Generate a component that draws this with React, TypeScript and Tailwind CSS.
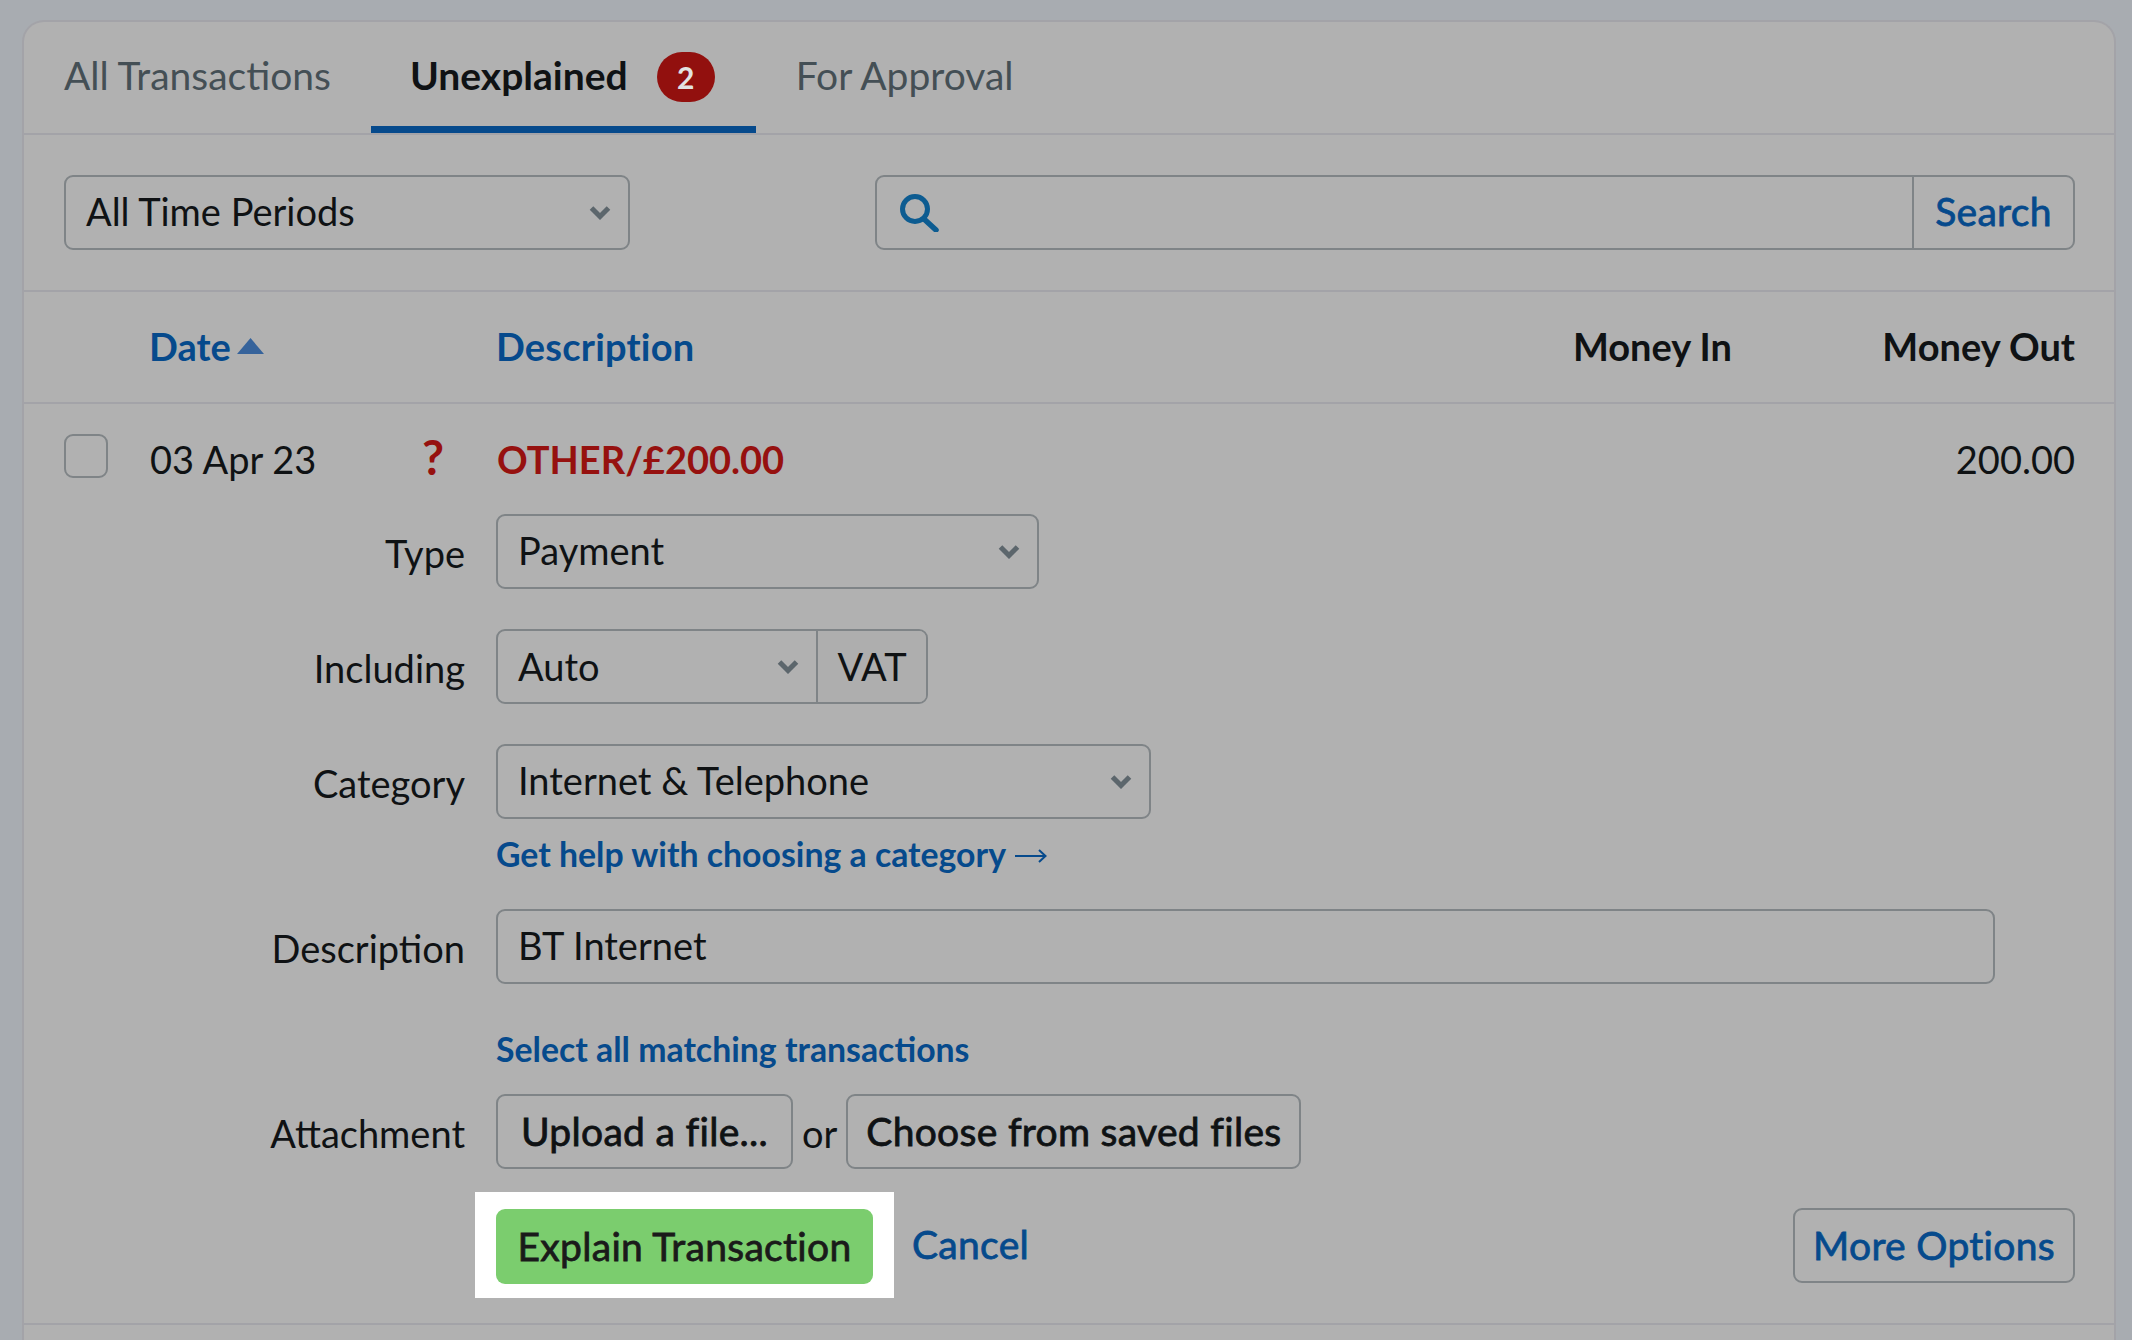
import type { ReactNode } from "react"

function Chevron() {
  return (
    <svg width="24" height="16" viewBox="0 0 24 16" className="shrink-0">
      <path d="M3.5 3 L12 11.5 L20.5 3" fill="none" stroke="#5c666c" strokeWidth="5" />
    </svg>
  )
}

function SearchIcon() {
  return (
    <svg width="40" height="38" viewBox="0 0 40 38">
      <circle cx="16" cy="15" r="12.5" fill="none" stroke="#0d5c91" strokeWidth="5" />
      <path d="M25 25 L37 36" fill="none" stroke="#0d5c91" strokeWidth="5.5" strokeLinecap="round" />
    </svg>
  )
}

function Select({ label, width }: { label: string; width: string }) {
  return (
    <div className={`${width} h-[75px] flex items-center justify-between rounded-[9px] border-2 border-[#7f8487] pl-[20px] pr-[16px]`}>
      <span className="pb-[3px]">{label}</span>
      <Chevron />
    </div>
  )
}

function FormRow({ label, children, className }: { label: string; children: ReactNode; className?: string }) {
  return (
    <div className={`flex gap-[31px] items-center ${className ?? ""}`}>
      <div className="w-[441px] text-right pt-[3px]">{label}</div>
      {children}
    </div>
  )
}

function OutlineButton({ children, width, blue }: { children: ReactNode; width: string; blue?: boolean }) {
  return (
    <div className={`${width} h-[75px] flex items-center justify-center rounded-[9px] border-2 border-[#7f8487] text-[39px] tracking-[0.3px] [-webkit-text-stroke:0.8px_currentColor] ${blue ? "text-[#064a8c]" : ""}`}>
      {children}
    </div>
  )
}

export default function App() {
  return (
    <div className="w-[2132px] h-[1340px] overflow-hidden bg-[#a8acb1] pt-[20px] pl-[22px] font-[Lato,sans-serif] text-[38px] leading-none text-[#0f1214]">
      <div className="w-[2094px] h-[1320px] rounded-t-[22px] border-2 border-b-0 border-[#a3a3a8] bg-[#b1b1b1]">
        {/* Tabs */}
        <div className="h-[113px] flex border-b-2 border-[#a3a3a8] pl-[40px] text-[39px]">
          <div className="flex items-center pb-[4px] pr-[40px] text-[#444f55]">All Transactions</div>
          <div className="flex items-center gap-[29px] pt-[3px] pl-[39px] pr-[41px] border-b-[7px] border-[#064a8c] font-bold">
            <span>Unexplained</span>
            <span className="mt-[3px] w-[58px] h-[50px] rounded-full bg-[#92100e] text-[#e2e2e2] text-[30px] flex items-center justify-center">2</span>
          </div>
          <div className="flex items-center pb-[4px] px-[40px] text-[#444f55]">For Approval</div>
        </div>

        {/* Filters */}
        <div className="h-[157px] flex border-b-2 border-[#a3a3a8] pl-[40px] pt-[40px]">
          <Select label="All Time Periods" width="w-[566px]" />
          <div className="ml-[245px] w-[1200px] h-[75px] flex rounded-[9px] border-2 border-[#7f8487]">
            <div className="flex-1 flex items-center pl-[22px]">
              <SearchIcon />
            </div>
            <div className="w-[161px] pb-[3px] border-l-2 border-[#7f8487] flex items-center justify-center text-[39px] tracking-[0.3px] [-webkit-text-stroke:0.8px_currentColor] text-[#064a8c]">Search</div>
          </div>
        </div>

        {/* Table header */}
        <div className="h-[112px] flex items-center border-b-2 border-[#a3a3a8] pl-[125px] pr-[39px] pb-[2px] font-bold">
          <div className="w-[347px] flex items-center gap-[6px] text-[#064a8c]">
            Date
            <svg width="27" height="16" viewBox="0 0 27 16">
              <path d="M13.5 0 L27 16 L0 16 Z" fill="#36639b" />
            </svg>
          </div>
          <div className="flex-1 text-[#064a8c] tracking-[0.2px]">Description</div>
          <div className="w-[160px] text-right">Money In</div>
          <div className="w-[343px] text-right">Money Out</div>
        </div>

        {/* Transaction */}
        <div className="h-[921px] border-b-2 border-[#a3a3a8] pt-[30px]">
          <div className="h-[44px] flex items-center pl-[40px] pr-[39px]">
            <div className="w-[44px] h-[44px] rounded-[9px] border-2 border-[#7f8487]" />
            <div className="w-[272px] ml-[42px] pt-[6px]">03 Apr 23</div>
            <div className="w-[75px] pt-[1px] text-[48px] font-bold text-[#96110f]">?</div>
            <div className="flex-1 pt-[6px] font-bold text-[#96110f]">OTHER/£200.00</div>
            <div className="pt-[6px]">200.00</div>
          </div>

          <FormRow label="Type" className="mt-[36px]">
            <Select label="Payment" width="w-[543px]" />
          </FormRow>

          <FormRow label="Including" className="mt-[40px]">
            <div className="w-[432px] h-[75px] flex rounded-[9px] border-2 border-[#7f8487]">
              <div className="w-[318px] flex items-center justify-between pl-[20px] pr-[16px]">
                <span className="pb-[2px]">Auto</span>
                <Chevron />
              </div>
              <div className="flex-1 pb-[2px] border-l-2 border-[#7f8487] bg-[#aeaeae] rounded-r-[7px] flex items-center justify-center">VAT</div>
            </div>
          </FormRow>

          <FormRow label="Category" className="mt-[40px]">
            <Select label="Internet & Telephone" width="w-[655px]" />
          </FormRow>

          <div className="mt-[19px] ml-[472px] flex items-center gap-[9px] text-[33.8px] font-bold text-[#064a8c]">
            Get help with choosing a category
            <svg width="32" height="16" viewBox="0 0 32 16" className="mt-[3px]">
              <path d="M0 8 H30 M24 2 L30.5 8 L24 14" fill="none" stroke="#064a8c" strokeWidth="2" />
            </svg>
          </div>

          <FormRow label="Description" className="mt-[37px]">
            <div className="w-[1499px] h-[75px] pb-[2px] flex items-center rounded-[9px] border-2 border-[#7f8487] pl-[20px]">BT Internet</div>
          </FormRow>

          <div className="mt-[49px] ml-[472px] text-[33.8px] font-bold text-[#064a8c]">
            Select all matching transactions
          </div>

          <FormRow label="Attachment" className="mt-[27px]">
            <div className="flex items-center gap-[9px]">
              <OutlineButton width="w-[297px]">Upload a file...</OutlineButton>
              <span className="pt-[4px]">or</span>
              <OutlineButton width="w-[455px]">Choose from saved files</OutlineButton>
            </div>
          </FormRow>

          <div className="mt-[23px] ml-[451px] pr-[39px] flex items-center">
            <div className="bg-white pl-[21px] pr-[21px] pt-[17px] pb-[14px]">
              <div className="w-[377px] h-[75px] rounded-[9px] bg-[#7bcd6e] flex items-center justify-center text-[39px] tracking-[0.3px] [-webkit-text-stroke:0.8px_currentColor] text-[#1a1a1a]">
                Explain Transaction
              </div>
            </div>
            <div className="ml-[18px] flex-1 text-[39px] tracking-[0.3px] [-webkit-text-stroke:0.8px_currentColor] text-[#064a8c]">Cancel</div>
            <div className="mt-[2px]">
              <OutlineButton width="w-[282px]" blue>More Options</OutlineButton>
            </div>
          </div>
        </div>
      </div>
    </div>
  )
}
